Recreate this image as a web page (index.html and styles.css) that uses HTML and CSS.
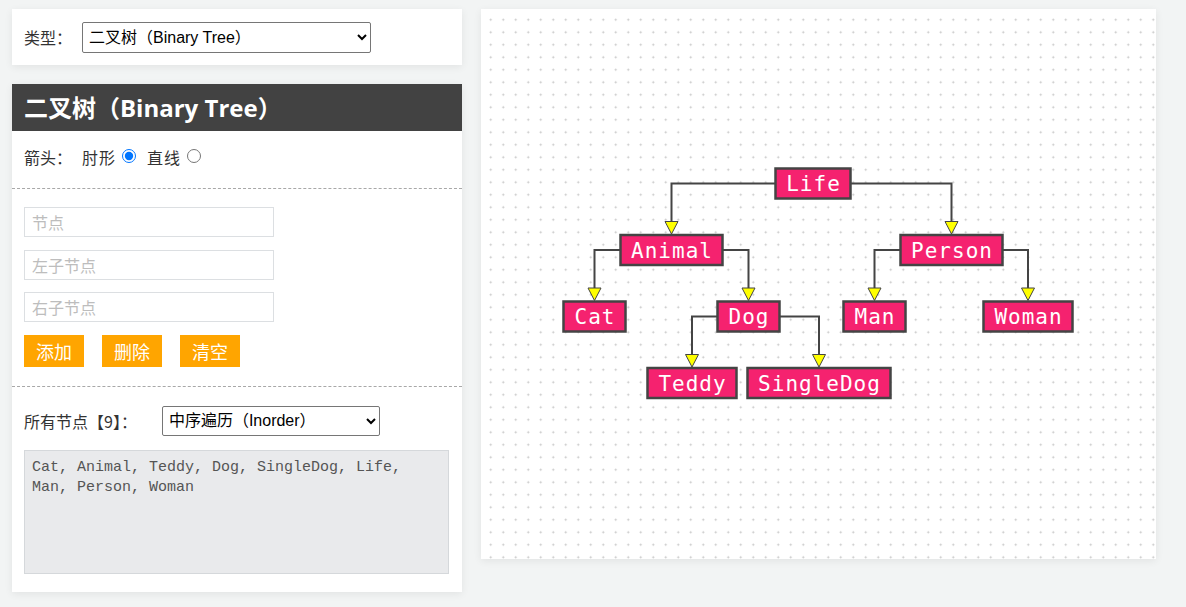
FILE: index.html
```html
<!DOCTYPE html>
<html lang="zh-CN">
<head>
<meta charset="utf-8">
<title>二叉树（Binary Tree）</title>
<link rel="stylesheet" href="styles.css">
</head>
<body>
<div class="app">
  <aside class="side">
    <div class="card type-card">
      <span class="label">类型：</span>
      <select class="select type-select"><option>二叉树（Binary Tree）</option></select>
    </div>
    <div class="card panel">
      <h2 class="panel-title">二叉树（Binary Tree）</h2>
      <div class="section arrow-row">
        <span class="label">箭头：</span><label class="opt">肘形<input type="radio" name="arrow" checked></label> <label class="opt">直线<input type="radio" name="arrow"></label>
      </div>
      <div class="section form">
        <input class="field" type="text" placeholder="节点">
        <input class="field" type="text" placeholder="左子节点">
        <input class="field" type="text" placeholder="右子节点">
        <div class="btns">
          <button class="btn">添加</button>
          <button class="btn">删除</button>
          <button class="btn">清空</button>
        </div>
      </div>
      <div class="section list">
        <div class="list-head">
          <span class="label list-label">所有节点【9】：</span>
          <select class="select order-select"><option>中序遍历（Inorder）</option></select>
        </div>
        <textarea class="output" readonly>Cat, Animal, Teddy, Dog, SingleDog, Life, Man, Person, Woman</textarea>
      </div>
    </div>
  </aside>
  <main class="canvas">
    <svg class="tree" width="675" height="550" viewBox="0 0 675 550">
      <g class="links">
        <path d="M294 174.5H190.5V213"/>
        <path d="M370 174.5H470.5V213"/>
        <path d="M139 241H113.5V280"/>
        <path d="M242 241H267.5V280"/>
        <path d="M419 241H393.5V280"/>
        <path d="M522 241H547V280"/>
        <path d="M236.5 307.5H211V346"/>
        <path d="M298.5 307.5H338V346"/>
      </g>
      <g class="heads">
        <polygon points="184,212.5 197,212.5 190.5,225"/>
        <polygon points="464,212.5 477,212.5 470.5,225"/>
        <polygon points="107,279 120,279 113.5,291.5"/>
        <polygon points="261,279 274,279 267.5,291.5"/>
        <polygon points="387,279 400,279 393.5,291.5"/>
        <polygon points="540.5,279 553.5,279 547,291.5"/>
        <polygon points="204.5,345.5 217.5,345.5 211,358"/>
        <polygon points="331.5,345.5 344.5,345.5 338,358"/>
      </g>
      <g class="nodes">
        <rect x="294.5" y="159.5" width="75" height="30"/>
        <rect x="139.5" y="226" width="102" height="30"/>
        <rect x="419.5" y="226" width="102" height="30"/>
        <rect x="82.5" y="292.5" width="62" height="30"/>
        <rect x="236.5" y="292.5" width="62" height="30"/>
        <rect x="362.5" y="292.5" width="62" height="30"/>
        <rect x="502.5" y="292.5" width="89" height="30"/>
        <rect x="166.5" y="359" width="89" height="30"/>
        <rect x="266.5" y="359" width="143" height="30"/>
      </g>
      <g class="labels">
        <text x="332.5" y="182">Life</text>
        <text x="191" y="248.5">Animal</text>
        <text x="471" y="248.5">Person</text>
        <text x="114" y="315">Cat</text>
        <text x="268" y="315">Dog</text>
        <text x="394" y="315">Man</text>
        <text x="547.5" y="315">Woman</text>
        <text x="211.5" y="381.5">Teddy</text>
        <text x="338.5" y="381.5">SingleDog</text>
      </g>
    </svg>
  </main>
</div>
</body>
</html>
```

FILE: styles.css
```css
* { box-sizing: border-box; }

html, body {
  margin: 0;
  background: #f2f4f4;
}

body {
  font-family: "Noto Sans CJK SC", "Open Sans", sans-serif;
  font-size: 16px;
  color: #333;
}

.app {
  display: flex;
  align-items: flex-start;
  gap: 19px;
  padding: 9px 12px;
}

.side {
  width: 450px;
  display: flex;
  flex-direction: column;
  gap: 19px;
}

.card {
  background: #fff;
  box-shadow: 0 2px 8px rgba(0, 0, 0, 0.07);
}

.type-card {
  display: flex;
  align-items: center;
  height: 56px;
  padding: 0 12px;
}

.label {
  margin-right: 10px;
  color: #333;
}

.select {
  font-family: "Liberation Sans", "Noto Sans CJK SC", sans-serif;
  font-size: 16px;
  color: #000;
  background: #fff;
  border: 1px solid #767676;
  border-radius: 2px;
  padding: 0 2px;
}

.type-select {
  width: 289px;
  height: 31px;
}

.panel {
  padding-bottom: 18px;
}

.panel-title {
  margin: 0;
  height: 47px;
  line-height: 47px;
  padding: 0 12px;
  background: #424242;
  color: #fff;
  font-family: "Open Sans", "Noto Sans CJK SC", sans-serif;
  font-weight: 700;
  font-size: 24px;
}

.section {
  padding: 0 12px;
  border-bottom: 1px dashed #a8a8a8;
}

.section.list {
  border-bottom: none;
}

.arrow-row {
  display: flex;
  align-items: center;
  height: 58px;
  padding-bottom: 5px;
}

.opt {
  display: inline-flex;
  align-items: center;
  margin-right: 11px;
  letter-spacing: 1px;
}

.opt input {
  margin: 0 0 2px 6px;
  width: 14px;
  height: 14px;
}

.form {
  padding-top: 18px;
  padding-bottom: 19px;
}

.field {
  display: block;
  width: 250px;
  height: 30px;
  margin: 0 0 12.5px;
  padding: 0 7px;
  border: 1px solid #dcdfe2;
  font-family: "Noto Sans CJK SC", sans-serif;
  font-size: 16px;
  color: #333;
  outline: none;
}

.field::placeholder {
  color: #bdbdbd;
}

.btns {
  display: flex;
  gap: 18px;
}

.btn {
  width: 60px;
  height: 32px;
  padding: 0;
  border: none;
  background: #ffa500;
  color: #fff;
  font-family: "Noto Sans CJK SC", sans-serif;
  font-size: 18px;
}

.list {
  padding-top: 19px;
}

.list-head {
  display: flex;
  align-items: center;
}

.list-label {
  margin-right: 25px;
}

.order-select {
  width: 218px;
  height: 30px;
}

.output {
  display: block;
  width: 425px;
  height: 124px;
  margin-top: 14px;
  padding: 7px;
  border: 1px solid #d5d8db;
  background: #e9eaec;
  color: #555;
  font-family: "Liberation Mono", monospace;
  font-size: 15px;
  line-height: 20px;
  resize: none;
  outline: none;
}

.canvas {
  width: 675px;
  height: 550px;
  background-color: #fff;
  background-image: radial-gradient(circle, #c4c4c4 0.7px, transparent 1.3px);
  background-size: 12.5px 12.5px;
  background-position: 3.5px 4.5px;
  box-shadow: 0 2px 8px rgba(0, 0, 0, 0.07);
}

.tree {
  display: block;
}

.links path {
  fill: none;
  stroke: #444;
  stroke-width: 2;
}

.heads polygon {
  fill: #ffff00;
  stroke: #444;
  stroke-width: 1;
}

.nodes rect {
  fill: #f5226f;
  stroke: #444;
  stroke-width: 2.5;
}

.labels text {
  fill: #fff;
  font-family: "DejaVu Sans Mono", monospace;
  font-size: 21px;
  letter-spacing: 1px;
  text-anchor: middle;
}
```
